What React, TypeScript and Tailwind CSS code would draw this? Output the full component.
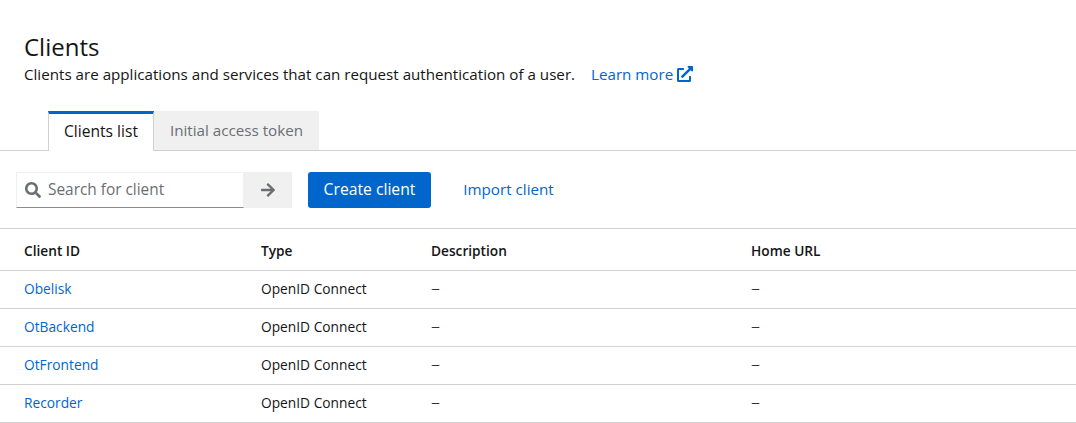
import { FaArrowRight, FaExternalLinkAlt, FaSearch } from "react-icons/fa"

const clients = ["Obelisk", "OtBackend", "OtFrontend", "Recorder"]

function Dash() {
  return <div className="text-[18px] leading-none font-light -mt-[3px]">–</div>
}

export default function App() {
  return (
    <div className="w-[1076px] h-[423px] overflow-hidden bg-white text-[#151515] font-['Open_Sans','Liberation_Sans',sans-serif]">
      {/* Header */}
      <div className="px-6 pt-[33px] h-[111px]">
        <h1 className="text-2xl leading-[28px]">Clients</h1>
        <p className="mt-[1px] flex items-center text-[15.17px] leading-6">
          Clients are applications and services that can request authentication of a user.
          <a href="#" className="ml-4 flex items-center gap-1 text-[#0066cc]">
            Learn more <FaExternalLinkAlt className="w-4 h-4" />
          </a>
        </p>
      </div>

      {/* Tabs */}
      <div className="flex h-10 pl-12 border-b border-[#d2d2d2]">
        <div className="w-[106px] h-10 pb-[2px] flex items-center justify-center bg-white border-t-[3px] border-x border-[#d2d2d2] border-t-[#0066cc] text-[15.6px]">
          Clients list
        </div>
        <div className="w-[165px] h-[39px] flex items-center justify-center bg-[#f0f0f0] text-[#6a6e73] text-[15.2px]">
          Initial access token
        </div>
      </div>

      {/* Toolbar */}
      <div className="flex items-start h-[78px] px-4 pt-[21px] border-b border-[#d2d2d2]">
        <div className="flex items-center w-[228px] h-9 gap-2 pl-2 border border-[#f0f0f0] border-b-[#8a8d90]">
          <FaSearch className="w-4 h-4 text-[#6a6e73]" />
          <span className="text-[15.4px] -ml-[1px] text-[#6a6e73]">Search for client</span>
        </div>
        <div className="flex items-center justify-center w-12 h-9 bg-[#f0f0f0] text-[#6a6e73]">
          <FaArrowRight className="w-4 h-4" />
        </div>
        <button className="ml-4 w-[123px] h-9 rounded-[3px] bg-[#0066cc] text-white text-[15.7px]">Create client</button>
        <button className="ml-4 w-[123px] h-9 pb-[2px] text-[#0066cc] text-[15.2px]">Import client</button>
      </div>

      {/* Table */}
      <div className="grid grid-cols-[237px_170px_320px_1fr] pl-6 pt-1 h-[42px] items-center border-b border-[#d2d2d2] text-[13.7px] font-semibold">
        <div>Client ID</div>
        <div>Type</div>
        <div>Description</div>
        <div>Home URL</div>
      </div>
      {clients.map((name) => (
        <div key={name} className="grid grid-cols-[237px_170px_320px_1fr] pl-6 h-[38px] items-center border-b border-[#d2d2d2] text-[13.75px]">
          <a href="#" className="text-[#0066cc]">{name}</a>
          <div>OpenID Connect</div>
          <Dash />
          <Dash />
        </div>
      ))}
    </div>
  )
}
